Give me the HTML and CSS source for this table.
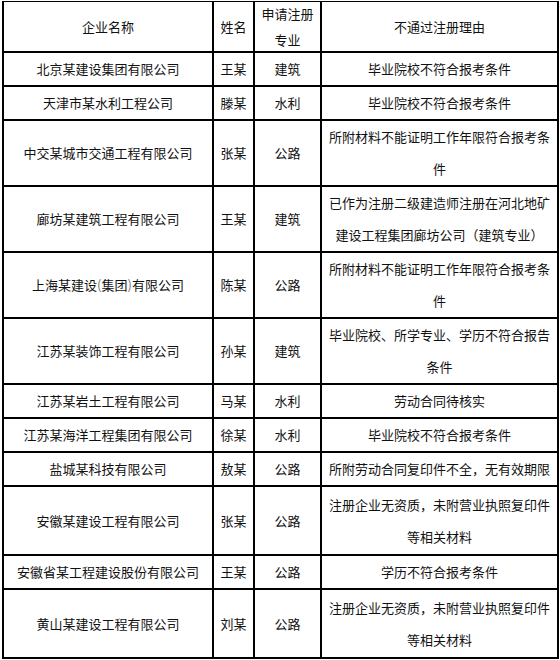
FILE: index.html
```html
<!DOCTYPE html>
<html lang="zh">
<head>
<meta charset="utf-8">
<link rel="stylesheet" href="styles.css">
</head>
<body>
<table class="grid">
  <colgroup>
    <col class="c-company">
    <col class="c-name">
    <col class="c-major">
    <col class="c-reason">
  </colgroup>
  <tr class="head">
    <td>企业名称</td>
    <td>姓名</td>
    <td><div class="two">申请注册专业</div></td>
    <td>不通过注册理由</td>
  </tr>
  <tr class="r1"><td>北京某建设集团有限公司</td><td>王某</td><td>建筑</td><td>毕业院校不符合报考条件</td></tr>
  <tr class="r1"><td>天津市某水利工程公司</td><td>滕某</td><td>水利</td><td>毕业院校不符合报考条件</td></tr>
  <tr class="r2"><td>中交某城市交通工程有限公司</td><td>张某</td><td>公路</td><td>所附材料不能证明工作年限符合报考条件</td></tr>
  <tr class="r2"><td>廊坊某建筑工程有限公司</td><td>王某</td><td>建筑</td><td>已作为注册二级建造师注册在河北地矿建设工程集团廊坊公司（建筑专业）</td></tr>
  <tr class="r2"><td>上海某建设<span class="paren">(</span>集团<span class="paren">)</span>有限公司</td><td>陈某</td><td>公路</td><td>所附材料不能证明工作年限符合报考条件</td></tr>
  <tr class="r2"><td>江苏某装饰工程有限公司</td><td>孙某</td><td>建筑</td><td>毕业院校、所学专业、学历不符合报告条件</td></tr>
  <tr class="r1"><td>江苏某岩土工程有限公司</td><td>马某</td><td>水利</td><td>劳动合同待核实</td></tr>
  <tr class="r1"><td>江苏某海洋工程集团有限公司</td><td>徐某</td><td>水利</td><td>毕业院校不符合报考条件</td></tr>
  <tr class="r1"><td>盐城某科技有限公司</td><td>敖某</td><td>公路</td><td>所附劳动合同复印件不全，无有效期限</td></tr>
  <tr class="r2b"><td>安徽某建设工程有限公司</td><td>张某</td><td>公路</td><td>注册企业无资质，未附营业执照复印件等相关材料</td></tr>
  <tr class="r1"><td>安徽省某工程建设股份有限公司</td><td>王某</td><td>公路</td><td>学历不符合报考条件</td></tr>
  <tr class="r2b"><td>黄山某建设工程有限公司</td><td>刘某</td><td>公路</td><td>注册企业无资质，未附营业执照复印件等相关材料</td></tr>
</table>
</body>
</html>
```

FILE: styles.css
```css
html, body {
  margin: 0;
  padding: 0;
  background: #fff;
}
body {
  padding: 1px 0 0 2px;
  font-family: "Noto Sans CJK SC", "Noto Sans", sans-serif;
  font-size: 13px;
  color: #111;
}
.grid {
  border-collapse: collapse;
  table-layout: fixed;
  width: 555px;
}
.c-company { width: 210px; }
.c-name { width: 41px; }
.c-major { width: 67px; }
.c-reason { width: 237px; }
.grid td {
  border: 2px solid #000;
  padding: 0 6px;
  text-align: center;
  vertical-align: middle;
  line-height: 32px;
  white-space: normal;
  word-break: break-all;
}
.grid tr:first-child td {
  border-top-width: 1px;
}
.grid td:nth-child(2),
.grid td:nth-child(3) {
  padding: 0 3px;
}
.head td {
  height: 49px;
}
.two {
  height: 49px;
  display: flex;
  flex-direction: column;
  justify-content: center;
  line-height: 26px;
}
.r1 td { height: 32px; }
.r2 td { height: 63px; }
.r2b td { height: 67px; }
.paren { color: #777; }
```
